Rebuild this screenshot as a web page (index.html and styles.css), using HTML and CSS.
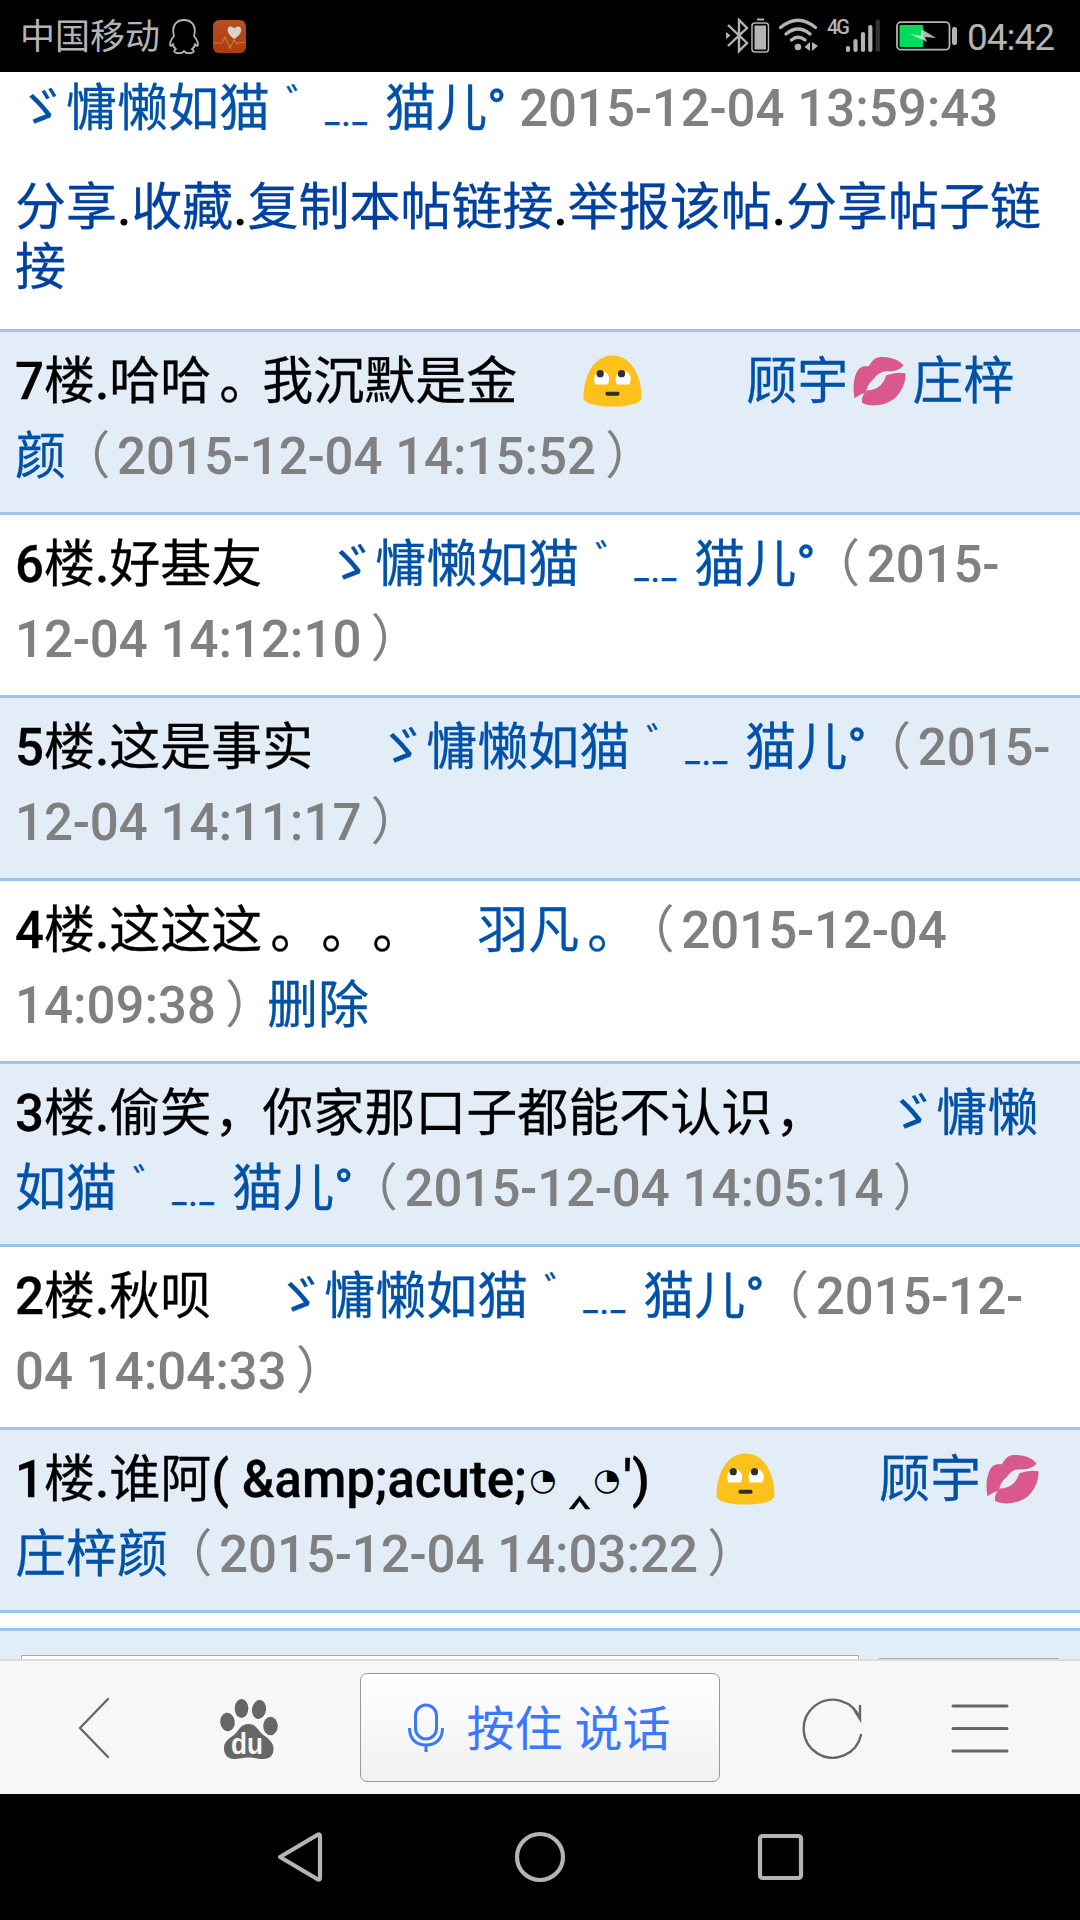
FILE: index.html
```html
<!DOCTYPE html>
<html lang="zh-CN">
<head>
<meta charset="utf-8">
<title>帖子</title>
<link rel="stylesheet" href="styles.css">
</head>
<body>
<svg class="defs" width="0" height="0">
  <symbol id="roll" viewBox="0 0 60 52">
    <path d="M30 0C50 0 59.500 22 59.500 43C59.500 48 48 52 30 52S.5 48 .5 43C.5 22 10 0 30 0Z" fill="#fcc21b"/>
    <path d="M12.500 29.500C9 22 13 16 19 16S29 22 25 29.500ZM34.500 29.500C31 22 35 16 41 16S51 22 47 29.500Z" fill="#fff"/>
    <circle cx="17.500" cy="18.500" r="3.700" fill="#2f2f2f"/><circle cx="39.200" cy="18.500" r="3.700" fill="#2f2f2f"/>
    <rect x="23" y="37" width="14" height="4" rx="1.500" fill="#2f2f2f"/>
  </symbol>
  <symbol id="kiss" viewBox="0 0 56 52">
    <path d="M2 44C-1 29 3 12 11 11C14 10 16 12 18 9C22 2 26 1 31 1C41 1 50 5 53 10C50 14 44 16 39 16C31 15 26 18 22 24C17 28 15 32 14 38Q7 40 2 44Z" fill="#d9598c"/>
    <path d="M10 49C9 43 12 39 15 36C26 35 32 30 35 20Q46 16 55 18C56 29 48 42 41 46C32 52 18 53 10 49Z" fill="#d9598c"/>
  </symbol>
</svg>

<header class="status">
  <span class="carrier">中国移动</span>
  <svg class="penguin" width="30" height="35" viewBox="0 0 30 35" fill="none" stroke="#b4b4b4" stroke-width="1.800" stroke-linejoin="round"><path d="M5 17C2 6 8 1 15 1S28 6 25 17Q29 22 29 26Q28 28 26 25Q26 28 23 30Q27 33 22 34Q17 35 15 32Q13 35 8 34Q3 33 7 30Q4 28 4 25Q2 28 1 26Q1 22 5 17Z"/></svg>
  <svg class="health" width="33" height="33" viewBox="0 0 33 33"><defs><linearGradient id="og" x2="0" y2="1"><stop stop-color="#b55122"/><stop offset="1" stop-color="#b03a0c"/></linearGradient></defs><rect width="33" height="33" rx="6" fill="url(#og)"/><path d="M21.500 19C12 13 14 6 18 6.500Q20.500 7 21.500 8.500Q23 6 26 6.500C30 8 29 14 21.500 19Z" fill="#d9d2c8"/><path d="M1 23H9L12 17L17 28L21 20L24 24L26 22.500H32" fill="none" stroke="#c97a35" stroke-width="1.200"/></svg>
  <div class="tray">
    <svg width="92" height="36" viewBox="726 19 92 36" fill="none" stroke="#b4b4b4">
      <path d="M728 26L747 44L739 52V21L747 29L728 47" stroke-width="2.400"/><path d="M726 33L730.500 36.500L726 40Z" fill="#b4b4b4" stroke="none"/>
      <rect x="752" y="24" width="16.500" height="29" rx="3" stroke-width="1.500"/><rect x="754.500" y="26.500" width="11.500" height="24" fill="#b4b4b4" stroke="none"/><path d="M757 20.500H764" stroke-width="2"/>
      <g stroke-width="3.200" stroke-linecap="round"><path d="M780.500 28.500Q798 14 815.500 28.500M786 35Q798 25 810 35M791.500 41Q798 35.500 805 41"/></g>
      <circle cx="798" cy="48" r="3.300" fill="#b4b4b4" stroke="none"/><path d="M804.500 48L810 43V52ZM812 43L818 47L812 52Z" fill="#b4b4b4" stroke="none"/>
    </svg>
    <span class="net">4G</span>
    <svg width="34" height="34" viewBox="846 19 34 34" stroke="#b4b4b4" stroke-width="4.200" stroke-linecap="round"><path d="M848 48V50M855.500 41V50M863 34V50M870.300 27V50"/><path d="M877.800 21.500V50" stroke="#333"/></svg>
    <svg class="power" width="62" height="30" viewBox="0 0 62 30"><rect x="1" y="1.200" width="52.500" height="27.500" rx="4" fill="none" stroke="#b4b4b4" stroke-width="1.800"/><rect x="3.500" y="4" width="23.500" height="22" rx="1" fill="#00db5c"/><rect x="56" y="6" width="5" height="18" rx="2.200" fill="#b4b4b4"/><path d="M27 9L40 17L29 16L31 21L27 19Z" fill="#b4b4b4"/><path d="M14 13L27 15V19Z M25 15V9L27 9V15Z" fill="#a8f2c6"/></svg>
    <time class="clock">04:42</time>
  </div>
</header>

<main class="page">
  <p class="author"><a class="user">ゞ慵懒如猫<span class="mark">゛</span><span class="dots">_<span class="dot">.</span>_</span>猫儿°</a> <time>2015-12-04 13:59:43</time></p>
  <p class="actions"><a>分享</a>.<a>收藏</a>.<a>复制本帖链接</a>.<a>举报该帖</a>.<a>分享帖子链<br>接</a></p>

  <article class="floor tint">7楼.哈哈<span class="stop">。</span>我沉默是金<svg class="emoji after"><use href="#roll" x="2" y="5" width="59" height="52"/></svg><a class="user far">顾宇<svg class="emoji"><use href="#kiss" x="4" y="6" width="55" height="50"/></svg>庄梓<br>颜</a><time><i class="open">（</i>2015-12-04 14:15:52<i class="close">）</i></time></article>
  <article class="floor">6楼.好基友<a class="user gap">ゞ慵懒如猫<span class="mark">゛</span><span class="dots">_<span class="dot">.</span>_</span>猫儿°</a><time><i class="open">（</i>2015-<br>12-04 14:12:10<i class="close">）</i></time></article>
  <article class="floor tint">5楼.这是事实<a class="user gap">ゞ慵懒如猫<span class="mark">゛</span><span class="dots">_<span class="dot">.</span>_</span>猫儿°</a><time><i class="open">（</i>2015-<br>12-04 14:11:17<i class="close">）</i></time></article>
  <article class="floor">4楼.这这这<span class="stop">。</span><span class="stop">。</span><span class="stop">。</span><a class="user gap">羽凡<span class="stop">。</span></a><time><i class="open">（</i>2015-12-04<br>14:09:38<i class="close">）</i></time><a class="user">删除</a></article>
  <article class="floor tint">3楼.偷笑<span class="stop comma">，</span>你家那口子都能不认识<span class="stop comma">，</span><a class="user gap">ゞ慵懒<br>如猫<span class="mark">゛</span><span class="dots">_<span class="dot">.</span>_</span>猫儿°</a><time><i class="open">（</i>2015-12-04 14:05:14<i class="close">）</i></time></article>
  <article class="floor">2楼.秋呗<a class="user gap">ゞ慵懒如猫<span class="mark">゛</span><span class="dots">_<span class="dot">.</span>_</span>猫儿°</a><time><i class="open">（</i>2015-12-<br>04 14:04:33<i class="close">）</i></time></article>
  <article class="floor tint">1楼.谁阿( &amp;amp;acute;<span class="eye">◔</span><span class="caret">‸</span><span class="eye">◔</span>')<svg class="emoji after"><use href="#roll" x="2" y="5" width="59" height="52"/></svg><a class="user far">顾宇<svg class="emoji"><use href="#kiss" x="4" y="6" width="55" height="50"/></svg><br>庄梓颜</a><time><i class="open">（</i>2015-12-04 14:03:22<i class="close">）</i></time></article>

  <form class="reply"><div class="field"></div><div class="send"></div></form>
</main>

<nav class="toolbar">
  <svg class="back" width="34" height="62" viewBox="0 0 34 62" fill="none" stroke="#666" stroke-width="2.300" stroke-linecap="round"><path d="M31 2L3 31L31 60"/></svg>
  <svg class="paw" width="60" height="62" viewBox="0 0 60 62" fill="#666"><ellipse cx="22.500" cy="10.500" rx="6.800" ry="9.500"/><ellipse cx="40" cy="11.500" rx="7" ry="9.500" transform="rotate(8 40 11.500)"/><ellipse cx="8.500" cy="24" rx="7.300" ry="9.200" transform="rotate(-6 8.500 24)"/><ellipse cx="51.500" cy="28" rx="7.300" ry="9.200"/><path d="M29.500 26C37 26 39 32 43 36C49 40 54 44 54.500 50C55 58 50 61 44 61C38 61 35 59.500 29.500 59.500S21 61 15 61C9 61 5 57 5 50C5 43 11 40 16 36C20 32 22 26 29.500 26Z"/><text x="12" y="56" class="du" textLength="32" lengthAdjust="spacingAndGlyphs">du</text></svg>
  <button class="voice"><svg width="36" height="50" viewBox="0 0 36 50" fill="none" stroke="#3c78ff" stroke-width="3"><rect x="7.500" y="2" width="21" height="34" rx="10.500"/><path d="M1.500 25C1.500 36 8 42 18 42S34.500 36 34.500 25M18 42V49"/></svg><span>按住 说话</span></button>
  <svg class="reload" width="62" height="62" viewBox="0 0 62 62" fill="none" stroke="#666" stroke-width="2.400" stroke-linecap="round"><path d="M59 38A29 29 0 1 1 58 22M58 9V22L53 14"/></svg>
  <svg class="menu" width="58" height="50" viewBox="0 0 58 50" stroke="#666" stroke-width="3" stroke-linecap="round"><path d="M2 3H56M2 25.500H56M2 48H56"/></svg>
</nav>

<footer class="sysnav">
  <svg width="46" height="52" viewBox="0 0 46 52"><path d="M3 26L41 3.500Q43 3 43 5V47Q43 49 41 48.500Z"/></svg>
  <svg width="52" height="52" viewBox="0 0 52 52"><circle cx="26" cy="26" r="23"/></svg>
  <svg width="48" height="48" viewBox="0 0 48 48"><rect x="3" y="3" width="41" height="42" rx="2.500"/></svg>
</footer>
</body>
</html>
```
FILE: styles.css
```css
* { box-sizing: border-box; }
body {
  margin: 0;
  width: 1080px;
  height: 1920px;
  display: flex;
  flex-direction: column;
  overflow: hidden;
  background: #fff;
  color: #000;
  font: 400 51px/75px "Roboto Medium", Roboto, "Noto Sans CJK SC", "DejaVu Sans", sans-serif;
}
p { margin: 0; }
svg { flex: none; }
.defs { position: absolute; }

.status {
  height: 72px;
  flex: none;
  display: flex;
  align-items: center;
  padding-left: 20px;
  background: #000;
  color: #b4b4b4;
  font-family: Roboto, "Noto Sans CJK SC", sans-serif;
}
.carrier { font-size: 35px; line-height: 72px; width: 149px; padding-top: 4px; white-space: nowrap; }
.health { margin-left: 14px; }
.tray { margin-left: auto; display: flex; align-items: center; padding-right: 25px; }
.net { font: 500 20px/20px Roboto, sans-serif; margin: -18px 0 0 9px; width: 19px; white-space: nowrap; letter-spacing: -2px; }
.power { margin-left: 16px; }
.clock { font-size: 37px; line-height: 72px; margin-left: 9px; width: 88px; padding-top: 3px; white-space: nowrap; letter-spacing: -1px; }

.page { flex: 1; min-height: 0; overflow: hidden; white-space: nowrap; }
.author { height: 105px; padding: 0 15px; margin-top: -1px; }
.actions { height: 153px; padding: 2px 15px 0; line-height: 60px; }
.actions a { color: #0041a0; -webkit-text-stroke: .3px #0041a0; }
.user { color: #0052a8; -webkit-text-stroke: .3px #0052a8; }
time { color: #808080; }
.status time { color: #b4b4b4; }
.floor { height: 183px; padding: 12px 15px; border-top: 3px solid #9cc5ec; -webkit-text-stroke: .3px #000; }
.floor time, .floor .eye { -webkit-text-stroke: 0; }
.floor .user { -webkit-text-stroke: .3px #0052a8; }
.tint { background: #e3edf8; }
.gap { margin-left: 62px; }
.far { margin-left: 102px; }
i, .stop { display: inline-block; width: 26px; line-height: 1em; font-style: normal; font-feature-settings: "halt"; }
.stop { margin: 0 17px 0 8px; }
.comma { margin: 0 22px 0 3px; }
.open { margin: 0 6px 0 19px; }
.close { margin: 0 16px 0 9px; }
.mark { display: inline-block; width: 39px; margin-left: 16px; line-height: 20px; font-size: 38px; vertical-align: 10px; }
.dots { display: inline-block; width: 60px; line-height: 32px; font-size: 32px; letter-spacing: 2px; vertical-align: 4px; }
.dot { vertical-align: -4px; }
.emoji { width: 64px; height: 60px; vertical-align: -1px; margin: -10px 0; }
.after { margin-left: 64px; margin-right: -1px; }
.eye { display: inline-block; width: 33px; text-align: center; vertical-align: 7px; font: 31px/30px "DejaVu Sans", sans-serif; }
.caret { display: inline-block; width: 31px; text-align: right; font: 64px/30px "DejaVu Sans", sans-serif; text-indent: -4px; vertical-align: 3px; }

.reply { height: 60px; margin-top: 15px; border-top: 3px solid #9cc5ec; background: #e3edf8; padding: 24px 21px; display: flex; }
.floor:nth-last-child(2) { height: 186px; border-bottom: 3px solid #9cc5ec; }
.field { width: 838px; height: 80px; background: #fff; border: 1px solid #aaa; }
.send { margin: 3px 0 0 20px; width: 180px; height: 80px; background: #ddd; border: 1px solid #aaa; }

.toolbar { flex: none; height: 135px; border-top: 2px solid #dcdcdc; background: #f7f7f7; display: flex; align-items: center; }
.back { margin-left: 77px; }
.paw { margin: 3px 0 0 108px; }
.du { font: 700 30px "Liberation Sans", sans-serif; fill: #f7f7f7; }
.voice { width: 360px; height: 109px; margin-left: 81px; border: 1.500px solid #999; border-radius: 7px; background: linear-gradient(#fff, #f1f1f1); display: flex; align-items: center; justify-content: center; gap: 23px; padding: 0 2px 0 0; color: #3c78ff; font: 400 48px/100px Roboto, "Noto Sans CJK SC", sans-serif; white-space: nowrap; }
.voice span { padding-top: 4px; }
.reload { margin-left: 82px; }
.menu { margin-left: 87px; }
.sysnav { flex: none; height: 126px; background: #000; display: flex; align-items: center; justify-content: center; gap: 191px; padding-left: 2px; }
.sysnav svg { fill: none; stroke: #b4b4b4; stroke-width: 4.200; stroke-linejoin: round; }
```
